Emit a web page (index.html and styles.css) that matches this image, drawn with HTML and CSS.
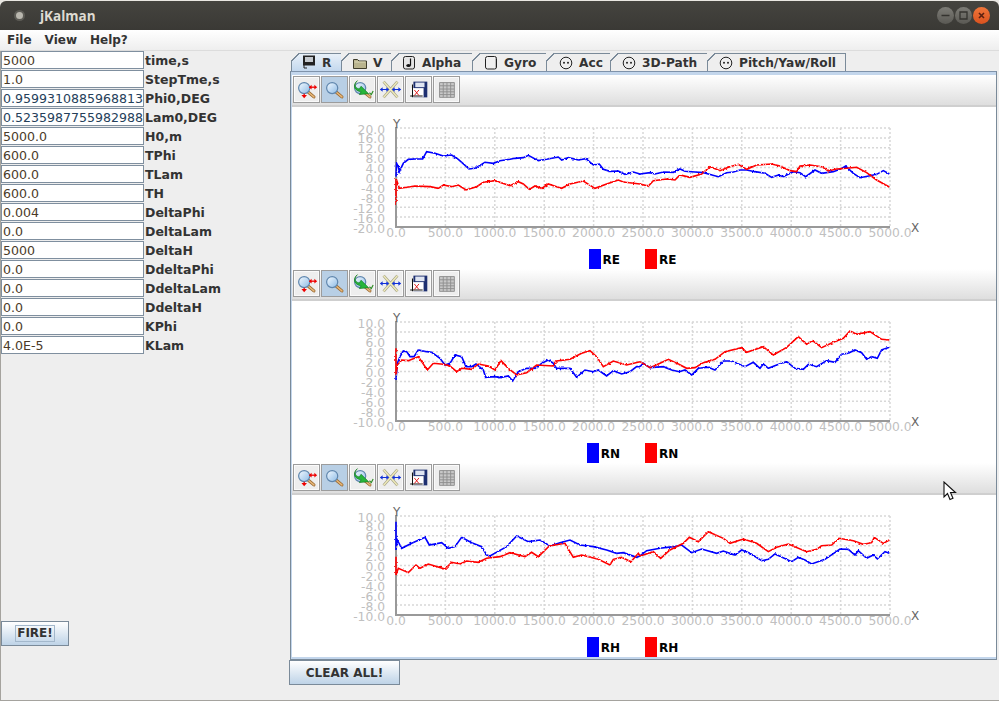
FILE: index.html
```html
<!DOCTYPE html>
<html>
<head>
<meta charset="utf-8">
<title>jKalman</title>
<link rel="stylesheet" href="styles.css">
</head>
<body>

<!-- shared icons and chart grid -->
<svg class="defs" width="0" height="0">
  <defs>
    <filter id="noise" x="-2%" y="-20%" width="104%" height="140%" color-interpolation-filters="sRGB">
      <feTurbulence type="fractalNoise" baseFrequency="0.5" numOctaves="1" seed="4"/>
      <feDisplacementMap in="SourceGraphic" scale="2.500" xChannelSelector="R" yChannelSelector="G"/>
    </filter>
    <linearGradient id="lens" x1="0" y1="0" x2="1" y2="1">
      <stop offset="0" stop-color="#f4faff"/><stop offset="1" stop-color="#8dbbe6"/>
    </linearGradient>
    <g id="grid">
      <path class="grid-line" d="M396 128H890M396 137.900H890M396 147.800H890M396 157.700H890M396 167.600H890M396 177.500H890M396 187.400H890M396 197.300H890M396 207.200H890M396 217.100H890"/>
      <path class="grid-line" d="M445.400 128V227M494.800 128V227M544.200 128V227M593.600 128V227M643 128V227M692.400 128V227M741.800 128V227M791.200 128V227M840.600 128V227M890 128V227"/>
      <path class="axis-line" d="M396 127V228M395 227H890"/>
    </g>
    <symbol id="ico-lens" viewBox="0 0 27 27">
      <path d="M15.500 16.500L21.500 21.500" stroke="#9a6a34" stroke-width="3.400" stroke-linecap="round"/>
      <path d="M15.500 16.500L21.500 21.500" stroke="#e8b878" stroke-width="1.600" stroke-linecap="round"/>
      <circle cx="11" cy="12" r="6" fill="url(#lens)" stroke="#5f86ad" stroke-width="1.300"/>
    </symbol>
    <symbol id="ico-zoom-axes" viewBox="0 0 27 27">
      <use href="#ico-lens"/>
      <path d="M17 11h6" stroke="#ee0000" stroke-width="1.400"/>
      <path d="M19 8.500l-3 2.500 3 2.500zM22 8.500l3 2.500-3 2.500z" fill="#ee0000"/>
      <path d="M11 18v3" stroke="#ee0000" stroke-width="1.400"/>
      <path d="M8 19.500l3 3.500 3-3.500z" fill="#ee0000"/>
    </symbol>
    <symbol id="ico-reset" viewBox="0 0 27 27">
      <use href="#ico-lens"/>
      <path d="M8 4C4 7 5 12 10 13l2-3 8 8-10 1 2-3C5 15 2 9 8 4z" fill="#27b53a" stroke="#0f7a1e" stroke-width=".7"/>
      <path d="M21 17l2 2 2-4" fill="none" stroke="#2a8a20" stroke-width="1.200"/>
    </symbol>
    <symbol id="ico-tools" viewBox="0 0 27 27">
      <path d="M6 5L21 22M21 5L6 22" stroke="#a8a68a" stroke-width="3"/>
      <path d="M6 5L21 22M21 5L6 22" stroke="#f3eebc" stroke-width="1.500"/>
      <path d="M3 13.500h8M16 13.500h8" stroke="#1030d8" stroke-width="1.300"/>
      <path d="M2 13.500l3-2.500v5zM12 13.500l-3-2.500v5zM15 13.500l3-2.500v5zM25 13.500l-3-2.500v5z" fill="#1030d8"/>
    </symbol>
    <symbol id="ico-save" viewBox="0 0 27 27">
      <path d="M8 5h15v17H8z" fill="#1d2f70"/>
      <path d="M10 6h10v5H10z" fill="#dfe5f2"/>
      <path d="M5 12h14v10H5z" fill="#fff"/>
      <path d="M7 8v14M4.500 20.500H18" stroke="#111" stroke-width="1.100"/>
      <path d="M9 20l5-6M9 14l5 6" stroke="#e01010" stroke-width="1"/>
    </symbol>
    <symbol id="ico-table" viewBox="0 0 27 27">
      <path d="M6 6h16v16H6z" fill="#c8c8c8" stroke="#8f8f8f"/>
      <path d="M6 9.500h16M6 13h16M6 16h16M6 19h16M10 6v16M14 6v16M18 6v16" stroke="#8f8f8f" stroke-width="1"/>
    </symbol>
    <symbol id="ico-face" viewBox="0 0 14 14">
      <circle cx="7" cy="7" r="5.800" fill="#eeeeee" stroke="#222" stroke-width="1"/>
      <circle cx="5" cy="6.800" r="1" fill="#222"/><circle cx="9" cy="6.800" r="1" fill="#222"/>
    </symbol>
  </defs>
</svg>

<div class="window">
  <div class="titlebar">
    <span class="app-dot"></span>
    <span class="app-title">jKalman</span>
    <div class="win-btns">
      <span class="win-btn"><svg width="17" height="17" viewBox="0 0 17 17"><path d="M4.500 8.500h8" stroke="#34332f" stroke-width="1.500"/></svg></span>
      <span class="win-btn"><svg width="17" height="17" viewBox="0 0 17 17"><path d="M5 5h7v7H5z" fill="none" stroke="#34332f" stroke-width="1.300"/></svg></span>
      <span class="win-btn close"><svg width="17" height="17" viewBox="0 0 17 17"><path d="M6 6l5 5M11 6l-5 5" stroke="#5a2010" stroke-width="1.600"/></svg></span>
    </div>
  </div>

  <div class="menubar">
    <span>File</span><span>View</span><span>Help?</span>
  </div>

  <div class="content">
    <div class="params">
      <div class="row"><div class="field">5000</div><label>time,s</label></div>
      <div class="row"><div class="field">1.0</div><label>StepTme,s</label></div>
      <div class="row"><div class="field blue">0.9599310885968813</div><label>Phi0,DEG</label></div>
      <div class="row"><div class="field blue">0.5235987755982988</div><label>Lam0,DEG</label></div>
      <div class="row"><div class="field">5000.0</div><label>H0,m</label></div>
      <div class="row"><div class="field">600.0</div><label>TPhi</label></div>
      <div class="row"><div class="field">600.0</div><label>TLam</label></div>
      <div class="row"><div class="field">600.0</div><label>TH</label></div>
      <div class="row"><div class="field">0.004</div><label>DeltaPhi</label></div>
      <div class="row"><div class="field">0.0</div><label>DeltaLam</label></div>
      <div class="row"><div class="field">5000</div><label>DeltaH</label></div>
      <div class="row"><div class="field">0.0</div><label>DdeltaPhi</label></div>
      <div class="row"><div class="field">0.0</div><label>DdeltaLam</label></div>
      <div class="row"><div class="field">0.0</div><label>DdeltaH</label></div>
      <div class="row"><div class="field">0.0</div><label>KPhi</label></div>
      <div class="row"><div class="field">4.0E-5</div><label>KLam</label></div>
      <button class="btn fire"><span>FIRE!</span></button>
    </div>

    <div class="main">
      <div class="tabs">
        <div class="tab selected">
          <svg width="14" height="15" viewBox="0 0 14 15"><path d="M1 .5h12v10H1z" fill="#222"/><path d="M3 2h8v5H3z" fill="#c4c9ce"/><path d="M2 10v3h3" fill="none" stroke="#222" stroke-width="1"/></svg>
          R</div>
        <div class="tab">
          <svg width="14" height="14" viewBox="0 0 14 14"><path d="M.5 3.500h4l1.500 1.500h7.500v7.500h-13z" fill="#b9b48e" stroke="#3f3d2c"/><path d="M1.500 6h11" stroke="#dcd8b8"/></svg>
          V</div>
        <div class="tab">
          <svg width="13" height="14" viewBox="0 0 13 14"><rect x=".5" y=".5" width="11" height="12.500" rx="2" fill="#e4e4e4" stroke="#222"/><path d="M7.500 2.500v7" stroke="#111" stroke-width="1.200"/><ellipse cx="5.500" cy="9.500" rx="2.200" ry="1.500" fill="#111"/></svg>
          Alpha</div>
        <div class="tab">
          <svg width="13" height="14" viewBox="0 0 13 14"><rect x=".5" y=".5" width="11" height="12.500" rx="2" fill="#efefef" stroke="#222"/><path d="M10.500 2v10" stroke="#bbb"/></svg>
          Gyro</div>
        <div class="tab"><svg width="14" height="14"><use href="#ico-face"/></svg>Acc</div>
        <div class="tab"><svg width="14" height="14"><use href="#ico-face"/></svg>3D-Path</div>
        <div class="tab"><svg width="14" height="14"><use href="#ico-face"/></svg>Pitch/Yaw/Roll</div>
      </div>

      <div class="panel">

        <div class="toolbar">
          <span class="tool"><svg width="25" height="25"><use href="#ico-zoom-axes"/></svg></span>
          <span class="tool active"><svg width="25" height="25"><use href="#ico-lens"/></svg></span>
          <span class="tool"><svg width="25" height="25"><use href="#ico-reset"/></svg></span>
          <span class="tool"><svg width="25" height="25"><use href="#ico-tools"/></svg></span>
          <span class="tool"><svg width="25" height="25"><use href="#ico-save"/></svg></span>
          <span class="tool"><svg width="25" height="25"><use href="#ico-table"/></svg></span>
        </div>
        <div class="chart">
          <svg class="plot" width="704" height="142" viewBox="292 107 704 142">
            <use href="#grid"/>
            <text class="ytick" x="385" y="133.500">20.0</text><text class="ytick" x="385" y="143.400">16.0</text><text class="ytick" x="385" y="153.300">12.0</text><text class="ytick" x="385" y="163.200">8.0</text><text class="ytick" x="385" y="173.100">4.0</text><text class="ytick" x="385" y="183">0.0</text><text class="ytick" x="385" y="192.900">-4.0</text><text class="ytick" x="385" y="202.800">-8.0</text><text class="ytick" x="385" y="212.700">-12.0</text><text class="ytick" x="385" y="222.600">-16.0</text><text class="ytick" x="385" y="232.500">-20.0</text>
            <text class="xtick" x="396" y="237">0.0</text><text class="xtick" x="445.400" y="237">500.0</text><text class="xtick" x="494.800" y="237">1000.0</text><text class="xtick" x="544.200" y="237">1500.0</text><text class="xtick" x="593.600" y="237">2000.0</text><text class="xtick" x="643" y="237">2500.0</text><text class="xtick" x="692.400" y="237">3000.0</text><text class="xtick" x="741.800" y="237">3500.0</text><text class="xtick" x="791.200" y="237">4000.0</text><text class="xtick" x="840.600" y="237">4500.0</text><text class="xtick" x="890" y="237">5000.0</text>
            <text class="axis-name" x="393" y="128">Y</text><text class="axis-name" x="911" y="232">X</text>
            <g class="trace blue" filter="url(#noise)">
              <polyline transform="translate(340 110) scale(.3333)" points="168,200 170,160 175,170 178,185 190,160 205,148 225,147 248,147 260,125 285,130 310,138 335,135 355,148 372,163 387,177 405,175 435,157 460,160 480,152 510,148 525,145 550,143 565,136 595,152 620,148 655,141 665,150 685,143 715,150 738,146 760,165 778,162 790,178 810,184 835,183 855,193 880,186 900,192"/>
              <polyline transform="translate(640 110) scale(.3333)" points="0,192 30,188 45,192 70,186 100,187 120,177 135,184 165,186 190,188 205,192 235,200 260,188 280,186 300,180 320,180 345,185 375,190 395,202 415,195 430,200 460,185 480,188 497,200 525,180 545,190 580,185 600,178 617,168 640,190 660,203 690,197 710,193 730,182 748,192"/>
            </g>
            <g class="trace red" filter="url(#noise)">
              <polyline transform="translate(340 110) scale(.3333)" points="168,285 168,205 178,235 200,232 225,228 270,230 295,235 310,225 335,230 355,225 378,240 410,230 430,217 465,212 510,227 535,215 550,222 568,238 585,228 605,235 625,222 650,230 665,235 690,222 730,213 765,235 800,222 835,210 850,216 900,222"/>
              <polyline transform="translate(640 110) scale(.3333)" points="0,222 25,228 40,212 80,207 105,210 120,195 150,202 185,192 210,170 240,182 265,172 295,163 320,178 350,165 395,162 420,168 450,182 470,185 480,168 510,165 545,170 565,183 590,177 620,175 650,172 680,188 710,210 748,231"/>
            </g>
          </svg>
          <div class="legend">
            <span class="item"><i class="swatch blue"></i>RE</span>
            <span class="item"><i class="swatch red"></i>RE</span>
          </div>
        </div>

        <div class="toolbar">
          <span class="tool"><svg width="25" height="25"><use href="#ico-zoom-axes"/></svg></span>
          <span class="tool active"><svg width="25" height="25"><use href="#ico-lens"/></svg></span>
          <span class="tool"><svg width="25" height="25"><use href="#ico-reset"/></svg></span>
          <span class="tool"><svg width="25" height="25"><use href="#ico-tools"/></svg></span>
          <span class="tool"><svg width="25" height="25"><use href="#ico-save"/></svg></span>
          <span class="tool"><svg width="25" height="25"><use href="#ico-table"/></svg></span>
        </div>
        <div class="chart">
          <svg class="plot" width="704" height="142" viewBox="292 107 704 142">
            <use href="#grid"/>
            <text class="ytick" x="385" y="133.500">10.0</text><text class="ytick" x="385" y="143.400">8.0</text><text class="ytick" x="385" y="153.300">6.0</text><text class="ytick" x="385" y="163.200">4.0</text><text class="ytick" x="385" y="173.100">2.0</text><text class="ytick" x="385" y="183">0.0</text><text class="ytick" x="385" y="192.900">-2.0</text><text class="ytick" x="385" y="202.800">-4.0</text><text class="ytick" x="385" y="212.700">-6.0</text><text class="ytick" x="385" y="222.600">-8.0</text><text class="ytick" x="385" y="232.500">-10.0</text>
            <text class="xtick" x="396" y="237">0.0</text><text class="xtick" x="445.400" y="237">500.0</text><text class="xtick" x="494.800" y="237">1000.0</text><text class="xtick" x="544.200" y="237">1500.0</text><text class="xtick" x="593.600" y="237">2000.0</text><text class="xtick" x="643" y="237">2500.0</text><text class="xtick" x="692.400" y="237">3000.0</text><text class="xtick" x="741.800" y="237">3500.0</text><text class="xtick" x="791.200" y="237">4000.0</text><text class="xtick" x="840.600" y="237">4500.0</text><text class="xtick" x="890" y="237">5000.0</text>
            <text class="axis-name" x="393" y="128">Y</text><text class="axis-name" x="911" y="232">X</text>
            <g class="trace blue" filter="url(#noise)">
              <polyline transform="translate(340 106) scale(.3333)" points="168,240 172,190 180,170 190,153 200,155 210,170 222,170 235,150 260,155 275,157 300,175 315,195 330,190 345,165 365,170 378,200 395,200 408,192 430,210 437,232 465,230 480,233 505,228 518,243 535,215 560,205 585,205 605,190 625,180 640,190 650,205 690,205 710,232 735,210 760,215 775,210 800,228 820,212 845,222 870,215 890,200 900,200"/>
              <polyline transform="translate(640 106) scale(.3333)" points="0,200 10,190 30,203 70,200 95,210 118,215 135,210 155,225 175,205 205,202 225,210 250,183 275,183 315,200 340,187 360,205 370,192 385,205 410,195 440,185 465,205 490,208 505,193 530,200 560,182 585,187 605,163 625,160 645,150 665,158 680,178 695,170 712,175 725,150 748,142"/>
            </g>
            <g class="trace red" filter="url(#noise)">
              <polyline transform="translate(340 106) scale(.3333)" points="168,145 168,225 172,195 185,180 205,182 235,170 262,210 280,190 310,193 330,198 350,215 365,205 395,208 415,192 445,198 465,210 483,182 505,205 530,225 560,218 590,195 640,198 650,183 690,178 725,160 750,152 770,170 790,200 820,183 860,195 900,185"/>
              <polyline transform="translate(640 106) scale(.3333)" points="0,185 30,203 60,190 85,178 115,192 140,205 165,203 190,188 225,178 255,155 305,143 320,157 370,140 400,165 440,142 475,110 500,133 518,122 545,143 580,127 610,115 630,93 650,103 690,95 725,118 748,120"/>
            </g>
          </svg>
          <div class="legend">
            <span class="item"><i class="swatch blue"></i>RN</span>
            <span class="item"><i class="swatch red"></i>RN</span>
          </div>
        </div>

        <div class="toolbar">
          <span class="tool"><svg width="25" height="25"><use href="#ico-zoom-axes"/></svg></span>
          <span class="tool active"><svg width="25" height="25"><use href="#ico-lens"/></svg></span>
          <span class="tool"><svg width="25" height="25"><use href="#ico-reset"/></svg></span>
          <span class="tool"><svg width="25" height="25"><use href="#ico-tools"/></svg></span>
          <span class="tool"><svg width="25" height="25"><use href="#ico-save"/></svg></span>
          <span class="tool"><svg width="25" height="25"><use href="#ico-table"/></svg></span>
        </div>
        <div class="chart">
          <svg class="plot" width="704" height="142" viewBox="292 107 704 142">
            <use href="#grid"/>
            <text class="ytick" x="385" y="133.500">10.0</text><text class="ytick" x="385" y="143.400">8.0</text><text class="ytick" x="385" y="153.300">6.0</text><text class="ytick" x="385" y="163.200">4.0</text><text class="ytick" x="385" y="173.100">2.0</text><text class="ytick" x="385" y="183">0.0</text><text class="ytick" x="385" y="192.900">-2.0</text><text class="ytick" x="385" y="202.800">-4.0</text><text class="ytick" x="385" y="212.700">-6.0</text><text class="ytick" x="385" y="222.600">-8.0</text><text class="ytick" x="385" y="232.500">-10.0</text>
            <text class="xtick" x="396" y="237">0.0</text><text class="xtick" x="445.400" y="237">500.0</text><text class="xtick" x="494.800" y="237">1000.0</text><text class="xtick" x="544.200" y="237">1500.0</text><text class="xtick" x="593.600" y="237">2000.0</text><text class="xtick" x="643" y="237">2500.0</text><text class="xtick" x="692.400" y="237">3000.0</text><text class="xtick" x="741.800" y="237">3500.0</text><text class="xtick" x="791.200" y="237">4000.0</text><text class="xtick" x="840.600" y="237">4500.0</text><text class="xtick" x="890" y="237">5000.0</text>
            <text class="axis-name" x="393" y="128">Y</text><text class="axis-name" x="911" y="232">X</text>
            <g class="trace blue" filter="url(#noise)">
              <polyline transform="translate(340 112) scale(.3333)" points="168,65 168,150 172,120 185,145 215,130 255,112 268,135 305,128 325,145 345,140 365,112 395,128 425,140 440,165 450,168 500,140 530,108 565,125 600,120 630,138 660,128 690,120 720,135 760,140 800,150 830,160 850,158 890,172 900,168"/>
              <polyline transform="translate(640 112) scale(.3333)" points="0,168 20,152 60,145 100,140 125,135 155,158 185,147 230,160 250,153 285,165 305,150 330,160 365,182 385,178 405,162 455,185 475,172 495,180 515,192 555,178 600,147 625,148 645,165 655,152 680,175 700,165 712,177 735,155 748,160"/>
            </g>
            <g class="trace red" filter="url(#noise)">
              <polyline transform="translate(340 112) scale(.3333)" points="168,170 168,225 175,205 205,218 228,195 240,205 265,192 315,207 335,187 360,192 380,183 415,187 440,175 480,170 510,158 555,170 575,157 595,170 628,138 675,130 700,172 725,165 775,178 810,195 820,178 845,172 873,185 895,160 900,168"/>
              <polyline transform="translate(640 112) scale(.3333)" points="0,168 40,155 62,175 90,150 130,130 148,112 175,125 205,95 250,115 270,130 310,117 350,130 385,155 410,142 445,132 500,155 530,148 545,137 575,135 597,115 640,122 670,133 695,128 703,112 730,130 748,120"/>
            </g>
          </svg>
          <div class="legend">
            <span class="item"><i class="swatch blue"></i>RH</span>
            <span class="item"><i class="swatch red"></i>RH</span>
          </div>
        </div>

      </div>
      <button class="btn clear">CLEAR ALL!</button>
    </div>
  </div>
</div>

<!-- mouse pointer caught in the shot -->
<svg class="pointer" width="14" height="20" viewBox="0 0 14 20"><path d="M1 1v15l3.500-3.500 2.500 6 3-1.300-2.500-5.700H12.500z" fill="#fff" stroke="#111" stroke-width="1.100"/></svg>

</body>
</html>
```

FILE: styles.css
```css
html, body {
  margin: 0;
  padding: 0;
}
body {
  width: 999px;
  height: 701px;
  overflow: hidden;
  position: relative;
  background-color: #e9e7e2;
  font-family: "DejaVu Sans", sans-serif;
  color: #333;
}
.defs {
  position: absolute;
}
.window {
  height: 701px;
  display: flex;
  flex-direction: column;
}

/* title bar */
.titlebar {
  height: 29px;
  margin-top: 1px;
  flex: none;
  display: flex;
  align-items: center;
  background: linear-gradient(#45443f, #3a3935);
  border-radius: 6px 6px 0 0;
}
.app-dot {
  width: 7px;
  height: 7px;
  margin-left: 16px;
  border-radius: 50%;
  background-color: #b9b7ae;
  box-shadow: 0 0 0 2px #5c5b55;
}
.app-title {
  margin-left: 17px;
  font: bold 13.500px "Open Sans", sans-serif;
  color: #dfdbd2;
}
.win-btns {
  margin-left: auto;
  margin-right: 9px;
  display: flex;
  gap: 1px;
}
.win-btn {
  width: 17px;
  height: 17px;
  border-radius: 50%;
  background: linear-gradient(#7d7c76, #5a5954);
}
.win-btn svg {
  display: block;
}
.win-btn.close {
  background: linear-gradient(#f0763a, #d9521f);
}

/* menu */
.menubar {
  height: 20px;
  flex: none;
  display: flex;
  align-items: center;
  padding-left: 7px;
  gap: 13px;
  font-size: 12px;
  font-weight: bold;
  background: linear-gradient(#ffffff, #eeeeee);
  border-bottom: 1px solid #dcdcdc;
}

.content {
  flex: 1;
  display: flex;
  background-color: #eeeeee;
  border-left: 1px solid #a5a39e;
  border-bottom: 1px solid #a5a39e;
}

/* left column */
.params {
  width: 288px;
  flex: none;
  display: flex;
  flex-direction: column;
  gap: 1px;
}
.row {
  height: 18px;
  display: flex;
  align-items: center;
}
.field {
  width: 143px;
  height: 18px;
  box-sizing: border-box;
  border: 1px solid #7f8f9f;
  background-color: #fff;
  padding-left: 1px;
  font-size: 12.570px;
  line-height: 17px;
  color: #4a3a28;
  white-space: nowrap;
  overflow: hidden;
}
.field.blue {
  color: #25405a;
}
.row label {
  margin-left: 1px;
  font-size: 12.500px;
  font-weight: bold;
}

.btn {
  padding: 0;
  box-sizing: border-box;
  height: 25px;
  border: 1px solid #7a8a99;
  background: linear-gradient(#ffffff, #bed3e7);
  font-family: "DejaVu Sans", sans-serif;
  font-size: 12px;
  font-weight: bold;
  color: #333;
}
.fire {
  width: 68px;
  margin-top: auto;
  margin-bottom: 54px;
}
.fire span {
  display: inline-block;
  padding: 0 1px;
  line-height: 15px;
  border: 1px solid #a3b8cc;
}
.clear {
  width: 111px;
}

/* tabs and plots */
.main {
  margin-right: 2px;
  flex: 1;
  display: flex;
  flex-direction: column;
}
.tabs {
  height: 18px;
  margin-top: 2px;
  padding-left: 2px;
  display: flex;
  flex: none;
}
.tab {
  position: relative;
  height: 18px;
  box-sizing: border-box;
  padding-left: 11px;
  display: flex;
  align-items: center;
  gap: 6px;
  border: 1px solid #7a8a99;
  border-width: 1px 1px 0 0;
  font-size: 12.200px;
  font-weight: bold;
  white-space: nowrap;
}
.tab:nth-child(1) { width: 51px; padding-left: 10px; }
.tab:nth-child(2) { width: 50px; }
.tab:nth-child(3) { width: 81px; }
.tab:nth-child(4) { width: 74px; padding-left: 12px; }
.tab:nth-child(5) { width: 64px; padding-left: 12px; }
.tab:nth-child(6) { width: 97px; }
.tab:nth-child(7) { width: 138px; }
.tab svg {
  display: block;
  flex: none;
}
.tab::before {
  content: "";
  position: absolute;
  left: -1px;
  top: -1px;
  width: 9px;
  height: 9px;
  background: linear-gradient(135deg, #eeeeee 5.500px, #7a8a99 5.500px, #7a8a99 6.500px, transparent 6.500px);
}
.tab.selected {
  background: linear-gradient(#e8f0f8, #c3d8ee);
  border-left: 1px solid #7a8a99;
  color: #333;
}
.panel {
  margin-left: 1px;
  flex: none;
  border: 1px solid #7a8a99;
  border-top-color: #7f93ab;
  padding: 3px 0 2px 1px;
  background-color: #c3d6ec;
}
.toolbar {
  height: 32px;
  box-sizing: border-box;
  display: flex;
  gap: 1px;
  padding: 1px 0 0 1px;
  background: linear-gradient(#ffffff, #dedede);
  border-bottom: 2px solid #cfcfcf;
}
.tool {
  width: 27px;
  height: 27px;
  box-sizing: border-box;
  border: 1px solid #9c9c9c;
  box-shadow: inset 0 0 0 1px #fafafa;
  background-color: #eeeeee;
}
.tool.active {
  background-color: #b8cfe5;
  box-shadow: none;
}
.tool svg {
  display: block;
}
.chart {
  height: 162px;
  background-color: #fff;
}
.plot {
  display: block;
}
.ytick, .xtick {
  font-size: 12.300px;
  fill: #c0c0c0;
}
.ytick {
  text-anchor: end;
}
.xtick {
  text-anchor: middle;
}
.axis-name {
  font-size: 12px;
  fill: #666;
}
.grid-line {
  fill: none;
  stroke: #d8d8d8;
  stroke-width: 1.500;
  stroke-dasharray: 2 2;
}
.axis-line {
  fill: none;
  stroke: #999;
  stroke-width: 2;
}
.trace polyline {
  fill: none;
  stroke-width: 4.800;
}
.trace.blue polyline {
  stroke: #0000ff;
}
.trace.red polyline {
  stroke: #ff0000;
}
.legend {
  height: 20px;
  display: flex;
  justify-content: center;
  gap: 25px;
  padding-right: 23px;
  font-size: 12px;
  line-height: 22px;
  font-weight: bold;
  color: #000;
}
.item {
  display: flex;
  align-items: flex-start;
  gap: 2px;
}
.swatch {
  width: 12px;
  height: 20px;
}
.swatch.blue {
  background-color: #0000ff;
}
.swatch.red {
  background-color: #ff0000;
}

.pointer {
  position: absolute;
  left: 943px;
  top: 481px;
}
```
